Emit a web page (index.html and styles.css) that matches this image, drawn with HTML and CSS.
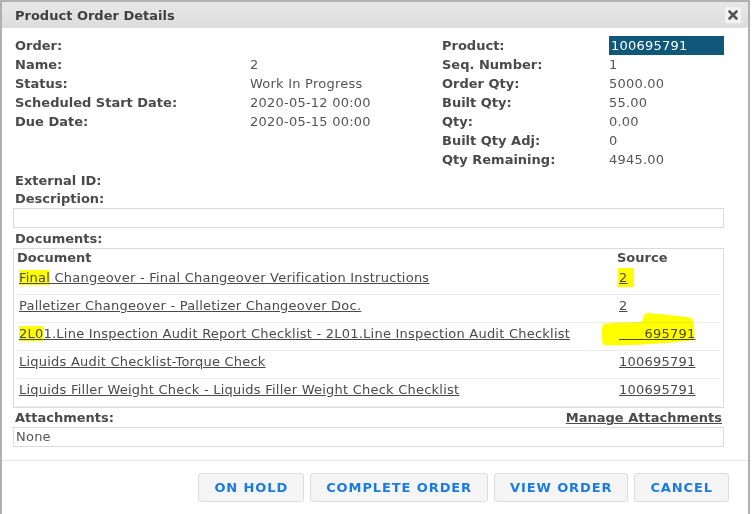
FILE: index.html
```html
<!DOCTYPE html>
<html lang="en">
<head>
    <meta charset="UTF-8">
    <title>Product Order Details</title>
    <link rel="stylesheet" href="styles.css">
</head>
<body>
    <div class="dialog">
        <div class="titlebar">
            <span class="title">Product Order Details</span>
            <button class="close" type="button">
                <svg width="12" height="12" viewBox="0 0 12 12"><path d="M2.5 2.5 L9.5 9.5 M9.5 2.5 L2.5 9.5" stroke="#555" stroke-width="2.6" stroke-linecap="round"/></svg>
            </button>
        </div>

        <div class="content">
            <div class="info">
                <div class="col col-left">
                    <div class="row"><span class="label">Order:</span><span class="value"></span></div>
                    <div class="row"><span class="label">Name:</span><span class="value">2</span></div>
                    <div class="row"><span class="label">Status:</span><span class="value">Work In Progress</span></div>
                    <div class="row"><span class="label">Scheduled Start Date:</span><span class="value">2020-05-12 00:00</span></div>
                    <div class="row"><span class="label">Due Date:</span><span class="value">2020-05-15 00:00</span></div>
                </div>
                <div class="col col-right">
                    <div class="row"><span class="label">Product:</span><span class="value product">100695791</span></div>
                    <div class="row"><span class="label">Seq. Number:</span><span class="value">1</span></div>
                    <div class="row"><span class="label">Order Qty:</span><span class="value">5000.00</span></div>
                    <div class="row"><span class="label">Built Qty:</span><span class="value">55.00</span></div>
                    <div class="row"><span class="label">Qty:</span><span class="value">0.00</span></div>
                    <div class="row"><span class="label">Built Qty Adj:</span><span class="value">0</span></div>
                    <div class="row"><span class="label">Qty Remaining:</span><span class="value">4945.00</span></div>
                </div>
            </div>

            <div class="field-label ext">External ID:</div>
            <div class="field-label desc-label">Description:</div>
            <div class="box desc"></div>

            <div class="field-label docs-label">Documents:</div>
            <div class="box docs">
                <div class="doc-head">
                    <span class="doc-name">Document</span>
                    <span class="doc-src">Source</span>
                </div>
                <div class="doc-row">
                    <span class="doc-name"><a href="#"><span class="hl">Final</span> Changeover - Final Changeover Verification Instructions</a></span>
                    <span class="doc-src"><a href="#" class="hl hl-src">2</a></span>
                </div>
                <div class="doc-row">
                    <span class="doc-name"><a href="#">Palletizer Changeover - Palletizer Changeover Doc.</a></span>
                    <span class="doc-src"><a href="#">2</a></span>
                </div>
                <div class="doc-row">
                    <span class="doc-name"><a href="#"><span class="hl">2L0</span>1.Line Inspection Audit Report Checklist - 2L01.Line Inspection Audit Checklist</a></span>
                    <span class="doc-src"><a href="#"><span class="painted">100</span>695791</a></span>
                    <svg class="marker" width="96" height="36" viewBox="0 0 96 36"><path d="M3 13 C14 11 30 12 42 11 C43 6 44 3 47 2 C62 3 80 5 92 7 C94 14 95 22 94 29 C80 31 64 32 50 33 C36 34 18 35 3 34 C1 27 1 19 3 13 Z" fill="#ffff00"/></svg>
                </div>
                <div class="doc-row">
                    <span class="doc-name"><a href="#">Liquids Audit Checklist-Torque Check</a></span>
                    <span class="doc-src"><a href="#">100695791</a></span>
                </div>
                <div class="doc-row">
                    <span class="doc-name"><a href="#">Liquids Filler Weight Check - Liquids Filler Weight Check Checklist</a></span>
                    <span class="doc-src"><a href="#">100695791</a></span>
                </div>
            </div>

            <div class="attach-head">
                <span class="field-label">Attachments:</span>
                <a href="#" class="manage">Manage Attachments</a>
            </div>
            <div class="box none">None</div>
        </div>

        <div class="footer">
            <button class="btn" type="button">ON HOLD</button>
            <button class="btn" type="button">COMPLETE ORDER</button>
            <button class="btn" type="button">VIEW ORDER</button>
            <button class="btn" type="button">CANCEL</button>
        </div>
    </div>
</body>
</html>
```

FILE: styles.css
```css
body {
    margin: 0;
    background: #fff;
    font-family: "DejaVu Sans", Verdana, sans-serif;
    font-size: 13px;
    letter-spacing: 0.23px;
    color: #555;
}

.dialog {
    width: 746px;
    height: 512px;
    border: 2px solid #b0b0b0;
    border-bottom: 0;
}

.titlebar {
    height: 26px;
    display: flex;
    align-items: center;
    justify-content: space-between;
    padding: 0 6px 0 13px;
    background: linear-gradient(#e8e8e8, #dcdcdc);
    border-radius: 0 0 3px 0;
}

.title {
    font-weight: bold;
    letter-spacing: 0;
    color: #404040;
}

.close {
    width: 18px;
    height: 18px;
    padding: 0;
    display: flex;
    align-items: center;
    justify-content: center;
    background: #f3f3f3;
    border: 1px solid #e4e4e4;
    border-radius: 3px;
}

.content {
    padding: 8px 24px 0 11px;
}

.info {
    display: flex;
    padding-left: 2px;
}

.col-left {
    width: 427px;
}

.row {
    display: flex;
    height: 19px;
    line-height: 19px;
}

.label,
.field-label {
    font-weight: bold;
    letter-spacing: 0;
    color: #4a4a4a;
}

.col-left .label {
    width: 235px;
}

.col-right .label {
    width: 167px;
}

.value.product {
    width: 113px;
    padding-left: 2px;
    background: #10587a;
    color: #fff;
}

.field-label {
    padding-left: 2px;
    line-height: 18px;
}

.ext {
    margin-top: 2px;
    line-height: 19px;
}

.docs-label {
    margin-top: 2px;
}

.box {
    border: 1px solid #dcdcdc;
}

.desc {
    height: 18px;
}

.docs {
    padding: 0 3px;
}

.doc-head,
.doc-row {
    display: flex;
    line-height: 18px;
}

.doc-head {
    font-weight: bold;
    letter-spacing: 0;
    color: #4a4a4a;
}

.doc-row {
    position: relative;
    padding: 2px 0 7px;
    border-bottom: 1px solid #ececec;
}

.doc-name {
    flex: 1;
}

.doc-src {
    width: 103px;
}

.doc-row a {
    margin-left: 2px;
    color: #4a4a4a;
}

.hl {
    background: #ffff00;
}

.hl-src {
    padding: 2px 6px 2px 1px;
    margin-left: 1px !important;
}

.painted {
    color: #ffff00;
}

.marker {
    position: absolute;
    left: 583px;
    top: -12px;
    mix-blend-mode: multiply;
    pointer-events: none;
}

.attach-head {
    display: flex;
    justify-content: space-between;
    margin-top: 1px;
    line-height: 18px;
}

.manage {
    padding-right: 2px;
    font-weight: bold;
    letter-spacing: 0;
    color: #4a4a4a;
}

.none {
    height: 18px;
    line-height: 18px;
    padding-left: 2px;
}

.footer {
    display: flex;
    justify-content: flex-end;
    gap: 6px;
    margin-top: 13px;
    padding: 12px 19px 0;
    border-top: 1px solid #e6e6e6;
}

.btn {
    height: 29px;
    padding: 0 15px;
    background: #f5f5f5;
    border: 1px solid #dcdcdc;
    border-radius: 3px;
    font-family: "DejaVu Sans", Verdana, sans-serif;
    font-size: 13px;
    font-weight: bold;
    letter-spacing: 0.9px;
    color: #1b7be0;
}
```
